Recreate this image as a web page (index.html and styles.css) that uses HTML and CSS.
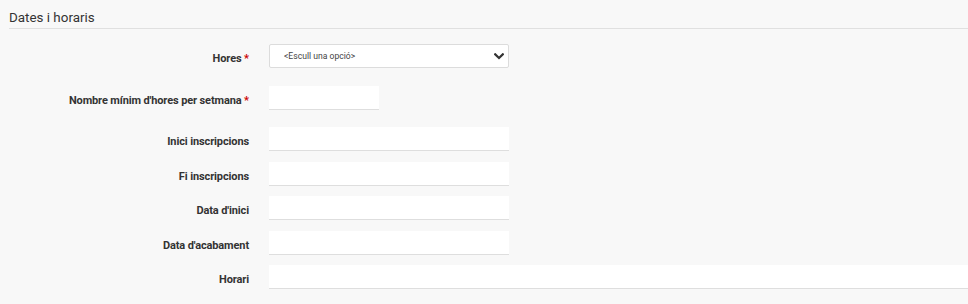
FILE: index.html
```html
<!DOCTYPE html>
<html lang="ca">
<head>
<meta charset="utf-8">
<title>Dates i horaris</title>
<link rel="stylesheet" href="styles.css">
</head>
<body>
<section class="panel">
  <h2 class="panel-title">Dates i horaris</h2>
  <form class="form">
    <div class="row req">
      <label class="label" for="hores">Hores <span class="star">*</span></label>
      <div class="select-wrap">
        <select id="hores" class="select">
          <option>&lt;Escull una opció&gt;</option>
        </select>
        <svg class="chevron" width="10" height="7" viewBox="0 0 10 7" aria-hidden="true">
          <path d="M1.2 1.3 L5 5 L8.8 1.3" fill="none" stroke="#333" stroke-width="2.2" stroke-linecap="square"/>
        </svg>
      </div>
    </div>
    <div class="row req">
      <label class="label" for="min">Nombre mínim d'hores per setmana <span class="star">*</span></label>
      <input id="min" class="input short" type="text">
    </div>
    <div class="row">
      <label class="label" for="ini">Inici inscripcions</label>
      <input id="ini" class="input" type="text">
    </div>
    <div class="row">
      <label class="label" for="fi">Fi inscripcions</label>
      <input id="fi" class="input" type="text">
    </div>
    <div class="row">
      <label class="label" for="di">Data d'inici</label>
      <input id="di" class="input" type="text">
    </div>
    <div class="row">
      <label class="label" for="da">Data d'acabament</label>
      <input id="da" class="input" type="text">
    </div>
    <div class="row">
      <label class="label" for="ho">Horari</label>
      <input id="ho" class="input wide" type="text">
    </div>
  </form>
</section>
</body>
</html>
```
FILE: styles.css
```css
html, body {
  margin: 0;
  padding: 0;
  background: #f8f8f8;
  font-family: Roboto, "Liberation Sans", Arial, sans-serif;
  color: #333;
}

.panel {
  padding-left: 9px;
}

.panel-title {
  margin: 0;
  padding-top: 9px;
  height: 19px;
  font-size: 13.4px;
  font-weight: 400;
  line-height: 17px;
  color: #333;
  border-bottom: 1px solid #e0e0e0;
}

.form {
  display: flex;
  flex-direction: column;
  padding-top: 15px;
}

.row {
  display: grid;
  grid-template-columns: 240px 1fr;
  column-gap: 20px;
  align-items: center;
  margin-bottom: 10.5px;
}

.row.req {
  margin-bottom: 17.5px;
}

.label {
  text-align: right;
  font-size: 11px;
  font-weight: 700;
  letter-spacing: -0.12px;
  line-height: 14px;
  padding-top: 6px;
  color: #333;
}

.star {
  color: #cc0000;
}

.select-wrap {
  position: relative;
  width: 240px;
  height: 24px;
}

.select {
  appearance: none;
  -webkit-appearance: none;
  box-sizing: border-box;
  width: 240px;
  height: 24px;
  margin: 0;
  padding: 0 0 0 14px;
  background: #fff;
  border: 1px solid #dcdcdc;
  border-radius: 2px;
  font-family: Roboto, "Liberation Sans", Arial, sans-serif;
  font-size: 8.6px;
  color: #444;
  outline: none;
}

.chevron {
  position: absolute;
  right: 5px;
  top: 9px;
  pointer-events: none;
}

.input {
  box-sizing: border-box;
  display: block;
  width: 240px;
  height: 24px;
  margin: 0;
  padding: 0 6px;
  background: #fff;
  border: none;
  border-bottom: 1px solid #dedede;
  border-radius: 0;
  outline: none;
}

.input.short {
  width: 110px;
}

.input.wide {
  width: 100%;
}
```
